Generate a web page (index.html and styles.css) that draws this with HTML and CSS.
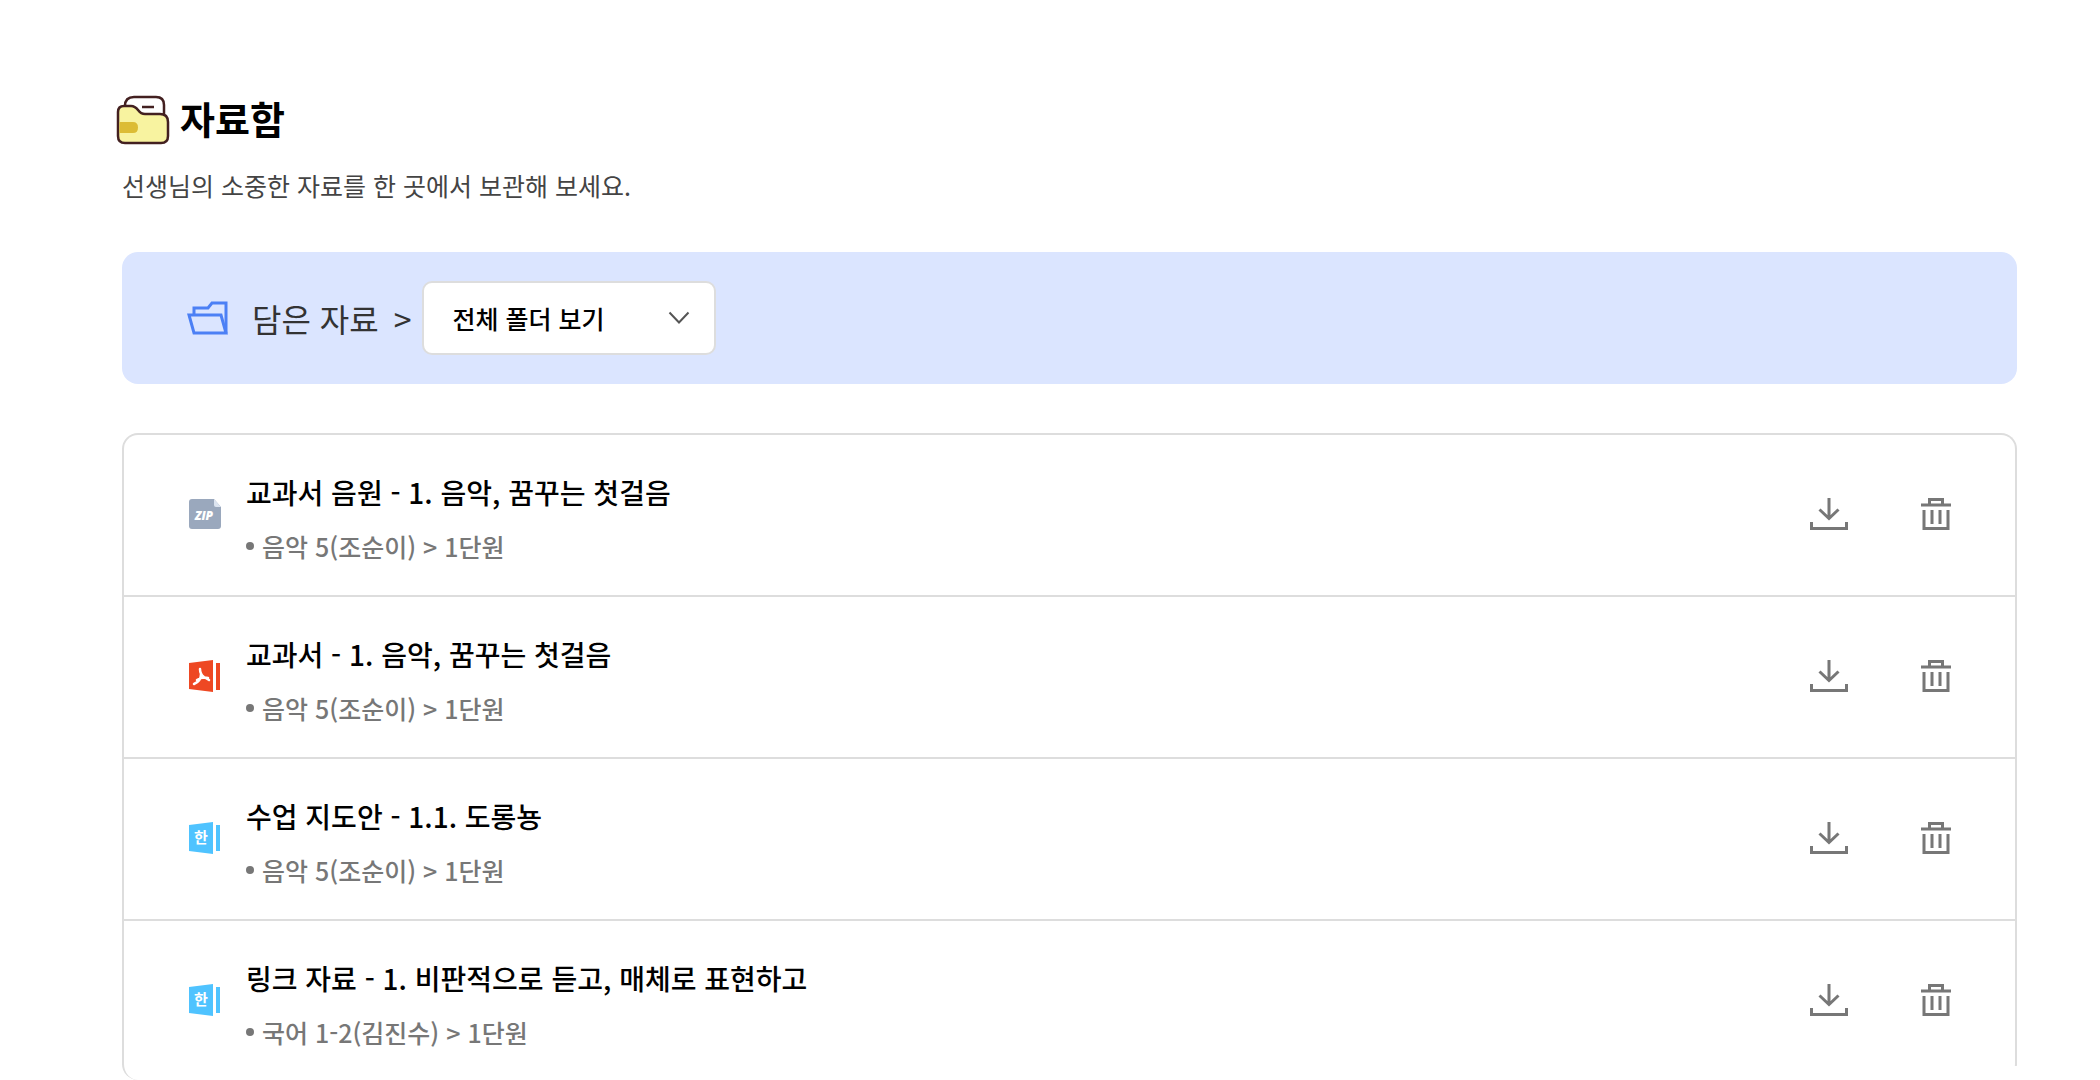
FILE: index.html
```html
<!DOCTYPE html>
<html lang="ko">
<head>
<meta charset="utf-8">
<meta name="viewport" content="width=device-width, initial-scale=1">
<title>자료함</title>
<link rel="stylesheet" href="styles.css">
</head>
<body>
<svg class="sprite" aria-hidden="true">
  <symbol id="i-download" viewBox="0 0 38 32">
    <path d="M19 0v20M9.500 11.500l9.500 9 9.500-9M1.500 24v6.500h35V24" fill="none" stroke="#777" stroke-width="3"/>
  </symbol>
  <symbol id="i-trash" viewBox="0 0 30 32">
    <path d="M0 7h30M8.500 7V1.500h13V7M3 12v18.500h24V12M11 12v14M19 12v14" fill="none" stroke="#777" stroke-width="3"/>
  </symbol>
  <symbol id="i-hwp" viewBox="0 0 34 32">
    <path d="M1 3l24-3v32L1 29zM28 3h4v26h-4z" fill="#4fc3ff"/>
    <text x="13" y="21" text-anchor="middle" class="icon-hwp-text">한</text>
  </symbol>
  <symbol id="i-pdf" viewBox="0 0 34 32">
    <path d="M1 3l24-3v32L1 29zM28 3h4v27h-4z" fill="#ee4823"/>
    <path d="M12 9c0 4 1 6 4 8l5 3M13 14c0 4-2 8-7 10M9 20c3-2 7-3 11-2" fill="none" stroke="#fff" stroke-width="2.500" stroke-linecap="round" stroke-linejoin="round"/>
  </symbol>
  <symbol id="i-zip" viewBox="0 0 34 32">
    <path d="M4 1h22l7 8v19a3 3 0 0 1-3 3H4a3 3 0 0 1-3-3V4a3 3 0 0 1 3-3z" fill="#9aa8bd"/>
    <path d="M26 1l7 8h-5a2 2 0 0 1-2-2z" fill="#dce4f0"/>
    <text x="16" y="22" text-anchor="middle" class="icon-zip-text">ZIP</text>
  </symbol>
</svg>

<main class="page">
  <header class="head">
    <h1 class="title">
      <svg class="title-icon" viewBox="0 0 54 50" aria-hidden="true">
        <path d="M9 14v-3q0-9 9-9h22q8 0 8 8v14H20z" fill="#fff" stroke="#432020" stroke-width="2.500"/>
        <path d="M2 17q0-6 6-6h7q4 0 7 4 3 4 7 4h15q8 0 8 8v14q0 7-7 7H9q-7 0-7-7z" fill="#f8f3a0" stroke="#432020" stroke-width="2.500"/>
        <path d="M3.500 27H17q5 0 5 5.500T17 38H3.500z" fill="#dcbc35"/>
        <path d="M26 12h12" stroke="#432020" stroke-width="2.500"/>
      </svg>
      자료함
    </h1>
    <p class="lead">선생님의 소중한 자료를 한 곳에서 보관해 보세요.</p>
  </header>

  <section class="filter">
    <svg class="filter-icon" viewBox="0 0 42 34" aria-hidden="true">
      <path d="M7 13V7h14l4-5h14v30" fill="none" stroke="#4c80f5" stroke-width="3"/>
      <path d="M2 14h32l5 18H7z" fill="none" stroke="#4c80f5" stroke-width="3"/>
    </svg>
    <label class="filter-label" for="folder">담은 자료 <span class="filter-sep">&gt;</span></label>
    <div class="select-box">
      <select class="select" id="folder"><option>전체 폴더 보기</option></select>
      <svg class="select-arrow" viewBox="0 0 22 14" aria-hidden="true"><path d="M1.500 1.500L11 11.500l9.500-10" fill="none" stroke="#555" stroke-width="2"/></svg>
    </div>
  </section>

  <ul class="list">
    <li class="item">
      <svg class="file-icon" aria-hidden="true"><use href="#i-zip"/></svg>
      <div class="item-body">
        <h2 class="item-title">교과서 음원 - 1. 음악, 꿈꾸는 첫걸음</h2>
        <p class="item-meta">음악 5(조순이) &gt; 1단원</p>
      </div>
      <button class="action" type="button" aria-label="다운로드"><svg class="i-download"><use href="#i-download"/></svg></button>
      <button class="action" type="button" aria-label="삭제"><svg class="i-trash"><use href="#i-trash"/></svg></button>
    </li>
    <li class="item">
      <svg class="file-icon" aria-hidden="true"><use href="#i-pdf"/></svg>
      <div class="item-body">
        <h2 class="item-title">교과서 - 1. 음악, 꿈꾸는 첫걸음</h2>
        <p class="item-meta">음악 5(조순이) &gt; 1단원</p>
      </div>
      <button class="action" type="button" aria-label="다운로드"><svg class="i-download"><use href="#i-download"/></svg></button>
      <button class="action" type="button" aria-label="삭제"><svg class="i-trash"><use href="#i-trash"/></svg></button>
    </li>
    <li class="item">
      <svg class="file-icon" aria-hidden="true"><use href="#i-hwp"/></svg>
      <div class="item-body">
        <h2 class="item-title">수업 지도안 - 1.1. 도롱뇽</h2>
        <p class="item-meta">음악 5(조순이) &gt; 1단원</p>
      </div>
      <button class="action" type="button" aria-label="다운로드"><svg class="i-download"><use href="#i-download"/></svg></button>
      <button class="action" type="button" aria-label="삭제"><svg class="i-trash"><use href="#i-trash"/></svg></button>
    </li>
    <li class="item">
      <svg class="file-icon" aria-hidden="true"><use href="#i-hwp"/></svg>
      <div class="item-body">
        <h2 class="item-title">링크 자료 - 1. 비판적으로 듣고, 매체로 표현하고</h2>
        <p class="item-meta">국어 1-2(김진수) &gt; 1단원</p>
      </div>
      <button class="action" type="button" aria-label="다운로드"><svg class="i-download"><use href="#i-download"/></svg></button>
      <button class="action" type="button" aria-label="삭제"><svg class="i-trash"><use href="#i-trash"/></svg></button>
    </li>
  </ul>
</main>
</body>
</html>
```

FILE: styles.css
```css
* {
  box-sizing: border-box;
}

html {
  scrollbar-width: none;
}

body {
  margin: 0;
  background: #fff;
  color: #111;
  font-family: "Noto Sans CJK KR", sans-serif;
}

h1,
h2,
p,
ul {
  margin: 0;
  padding: 0;
}

.sprite {
  display: none;
}

.page {
  padding: 92px 83px 0 122px;
}

.title {
  display: flex;
  align-items: flex-start;
  gap: 10px;
  margin-left: -6px;
  color: #000;
  font-size: 38px;
  line-height: 52px;
  font-weight: 700;
}

.title-icon {
  width: 54px;
  height: 50px;
  margin-top: 3px;
}

.lead {
  margin-top: 22px;
  color: #444;
  font-size: 25px;
  line-height: 36px;
}

.filter {
  display: flex;
  align-items: center;
  margin-top: 49px;
  padding: 29px 65px;
  border-radius: 16px;
  background: #dbe5ff;
}

.filter-icon {
  width: 42px;
  height: 34px;
}

.filter-label {
  margin-left: 23px;
  color: #333;
  font-size: 32px;
  line-height: 48px;
}

.filter-sep {
  margin: 0 11px 0 6px;
}

.select-box {
  display: grid;
  align-items: center;
  width: 294px;
}

.select {
  grid-area: 1 / 1;
  width: 100%;
  height: 74px;
  padding: 0 56px 0 28px;
  border: 2px solid #ddd;
  border-radius: 10px;
  background: #fff;
  color: #000;
  font: 500 25px "Noto Sans CJK KR", sans-serif;
  appearance: none;
}

.select-arrow {
  grid-area: 1 / 1;
  justify-self: end;
  width: 22px;
  height: 14px;
  margin-right: 26px;
  pointer-events: none;
}

.list {
  position: relative;
  margin-top: 49px;
  border: 2px solid #ddd;
  border-bottom: 0;
  border-radius: 16px;
  list-style: none;
}

/* The right rule stops short of the card's lower corner */
.list::after {
  content: "";
  position: absolute;
  right: -2px;
  bottom: 0;
  width: 16px;
  height: 14px;
  background: #fff;
}

.item {
  display: flex;
  align-items: center;
  padding: 29px 64px 31px;
}

.item + .item {
  border-top: 2px solid #ddd;
}

.item:last-child {
  padding-bottom: 30px;
}

.file-icon {
  flex: none;
  width: 34px;
  height: 32px;
}

.icon-hwp-text {
  fill: #fff;
  font: 700 15px "Noto Sans CJK KR", sans-serif;
}

.icon-zip-text {
  fill: #fff;
  font: italic 800 12px "Open Sans", sans-serif;
}

.item-body {
  flex: 1;
  margin-left: 24px;
  padding-top: 8px;
}

.item-title {
  color: #000;
  font-size: 28px;
  line-height: 40px;
  font-weight: 500;
}

.item-meta {
  display: flex;
  align-items: center;
  gap: 8px;
  margin-top: 16px;
  color: #777;
  font-size: 25px;
  line-height: 36px;
  font-weight: 500;
}

.item-meta::before {
  content: "";
  width: 8px;
  height: 8px;
  border-radius: 50%;
  background: #777;
}

.action {
  display: flex;
  padding: 0;
  border: 0;
  background: none;
}

.action + .action {
  margin-left: 73px;
}

.i-download {
  width: 38px;
  height: 32px;
}

.i-trash {
  width: 30px;
  height: 32px;
}
```
